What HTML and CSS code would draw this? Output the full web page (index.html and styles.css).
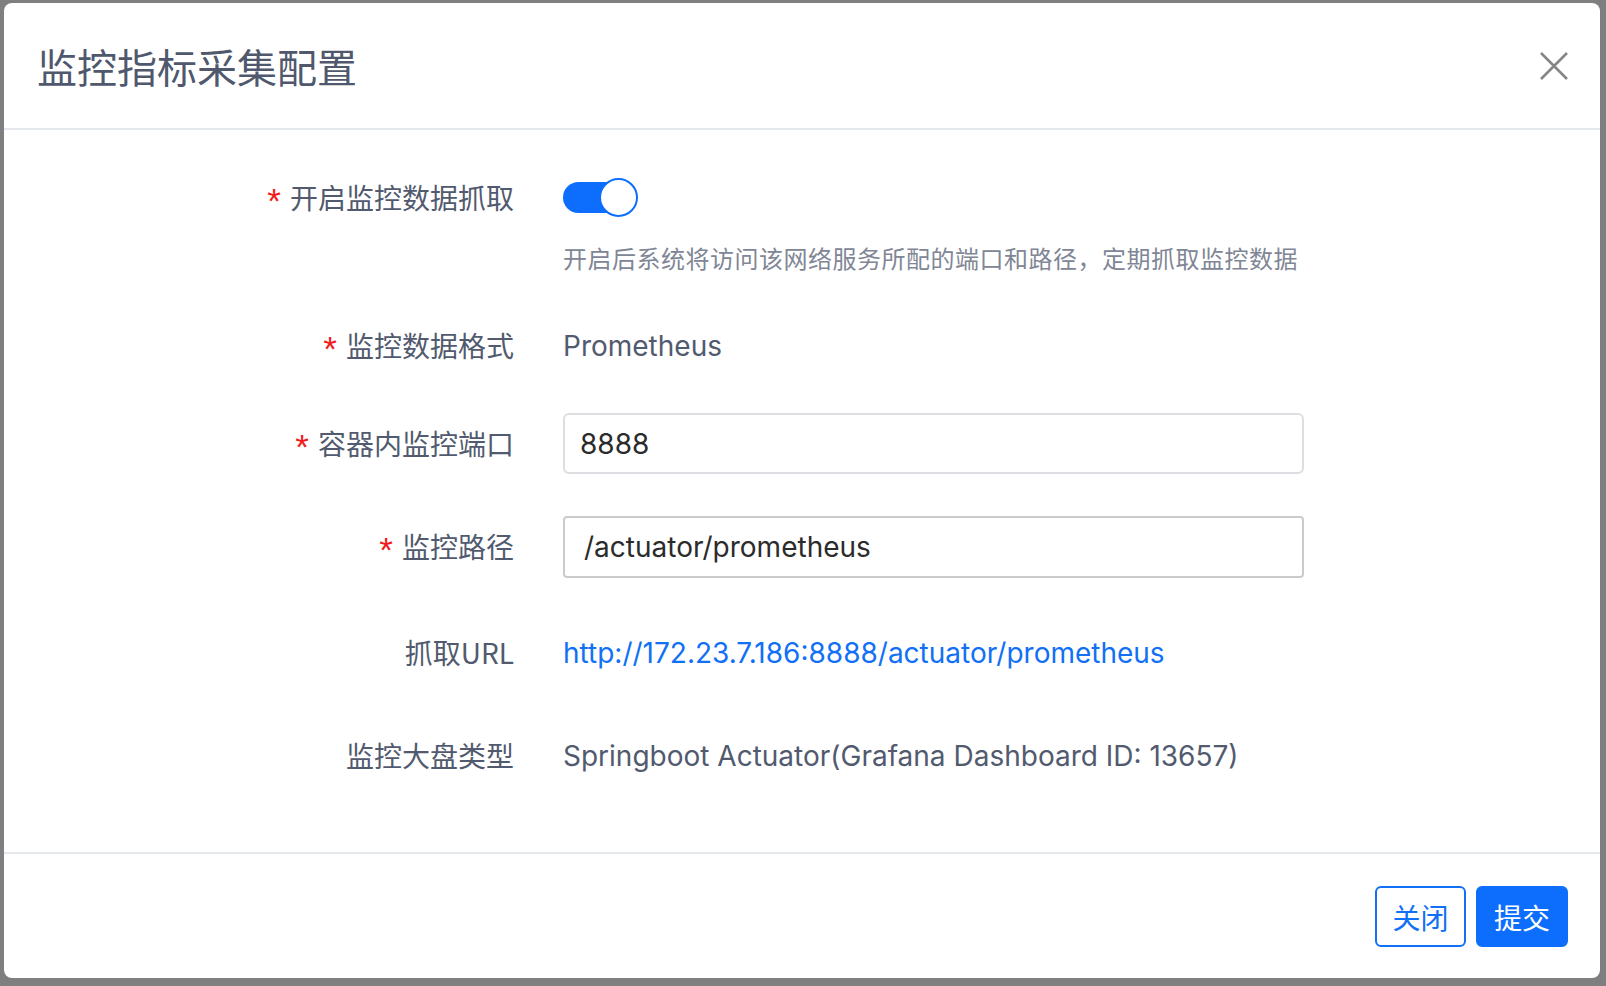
FILE: index.html
```html
<!DOCTYPE html>
<html lang="zh-CN">
<head>
<meta charset="UTF-8">
<title>监控指标采集配置</title>
<link rel="stylesheet" href="styles.css">
</head>
<body>

<div class="modal">
  <div class="modal-header">
    <div class="modal-title">监控指标采集配置</div>
    <span class="modal-close">
      <svg width="28" height="28" viewBox="0 0 28 28">
        <path d="M1 1 L27 27 M27 1 L1 27" stroke="#858585" stroke-width="2.6" fill="none"/>
      </svg>
    </span>
  </div>

  <div class="modal-body">
    <div class="form-item has-help">
      <label class="form-label required">开启监控数据抓取</label>
      <div class="form-content">
        <div class="control-line">
          <span class="switch switch-on"><span class="switch-knob"></span></span>
        </div>
        <div class="form-help">开启后系统将访问该网络服务所配的端口和路径，定期抓取监控数据</div>
      </div>
    </div>

    <div class="form-item">
      <label class="form-label required">监控数据格式</label>
      <div class="form-content">
        <div class="control-line form-text">Prometheus</div>
      </div>
    </div>

    <div class="form-item">
      <label class="form-label required">容器内监控端口</label>
      <div class="form-content">
        <input class="input input-number" type="text" value="8888">
      </div>
    </div>

    <div class="form-item">
      <label class="form-label required">监控路径</label>
      <div class="form-content">
        <input class="input input-path" type="text" value="/actuator/prometheus">
      </div>
    </div>

    <div class="form-item">
      <label class="form-label">抓取URL</label>
      <div class="form-content">
        <div class="control-line">
          <a class="form-link" href="#">http://172.23.7.186:8888/actuator/prometheus</a>
        </div>
      </div>
    </div>

    <div class="form-item">
      <label class="form-label">监控大盘类型</label>
      <div class="form-content">
        <div class="control-line form-text">Springboot Actuator(Grafana Dashboard ID: 13657)</div>
      </div>
    </div>
  </div>

  <div class="modal-footer">
    <button class="btn btn-ghost">关闭</button>
    <button class="btn btn-primary">提交</button>
  </div>
</div>

</body>
</html>
```

FILE: styles.css
```css
/* okno modalne na szarym tle */
body {
  margin: 0;
  padding: 3px 6px 8px 4px;
  background-color: #7f7f7f;
  font-family: Inter, "Noto Sans CJK SC", sans-serif;
}

.modal {
  width: 1596px;
  height: 975px;
  background-color: #fff;
  border-radius: 8px;
  display: flex;
  flex-direction: column;
  overflow: hidden;
}

.modal-header {
  height: 125px;
  border-bottom: 2px solid #e4e7eb;
  padding: 0 32px 0 33px;
  display: flex;
  align-items: center;
  justify-content: space-between;
  flex-shrink: 0;
}

.modal-title {
  font-family: "Noto Sans CJK SC", sans-serif;
  font-size: 40px;
  line-height: 1;
  color: #4f586d;
}

.modal-close {
  width: 28px;
  height: 28px;
  cursor: pointer;
  display: block;
}

.modal-close svg {
  display: block;
}

.modal-body {
  flex: 1;
  min-height: 0;
  padding: 37px 0 0;
}

.form-item {
  display: flex;
  align-items: flex-start;
  margin-bottom: 42px;
}

/* drobne korekty odstępów między wierszami */
.form-item.has-help {
  margin-bottom: 40px;
}

.form-item:nth-child(2) {
  margin-bottom: 38px;
}

.form-item:nth-child(4) {
  margin-bottom: 44px;
}

.form-item:nth-child(5) {
  margin-bottom: 43px;
}

.form-label {
  width: 510px;
  height: 60px;
  flex-shrink: 0;
  display: flex;
  align-items: center;
  justify-content: flex-end;
  font-family: "Noto Sans CJK SC", sans-serif;
  font-size: 28px;
  line-height: 1;
  color: #515a6e;
}

.form-label.required::before {
  content: "*";
  color: #f21b1b;
  margin-right: 9px;
  font-family: "Liberation Sans", sans-serif;
  font-size: 35px;
  line-height: 1;
  position: relative;
  top: 3px;
}

.form-content {
  margin-left: 49px;
  width: 741px;
}

.control-line {
  height: 60px;
  display: flex;
  align-items: center;
}

.form-text {
  font-size: 28px;
  color: #515a6e;
  padding-top: 2px;
  box-sizing: border-box;
}

.form-help {
  margin-top: 14px;
  font-family: "Noto Sans CJK SC", sans-serif;
  font-size: 24px;
  line-height: 34px;
  letter-spacing: 0.5px;
  color: #808695;
  white-space: nowrap;
}

.form-link {
  font-size: 28px;
  color: #1170f5;
  text-decoration: none;
  padding-top: 2px;
}

/* przełącznik */
.switch {
  position: relative;
  display: inline-block;
  width: 75px;
  height: 39px;
}

.switch::before {
  content: "";
  position: absolute;
  left: 0;
  top: 4px;
  width: 66px;
  height: 31px;
  border-radius: 16px;
  background-color: #0d6efd;
}

.switch-knob {
  position: absolute;
  right: 0;
  top: 0;
  width: 39px;
  height: 39px;
  box-sizing: border-box;
  border: 2px solid #0d6efd;
  border-radius: 50%;
  background-color: #fff;
}

/* pola tekstowe */
.input {
  display: block;
  width: 100%;
  height: 61px;
  box-sizing: border-box;
  margin: 0;
  font-family: Inter, "Noto Sans CJK SC", sans-serif;
  font-size: 28px;
  color: #2b2b2b;
  background-color: #fff;
  outline: none;
}

.input-number {
  border: 2px solid #dcdee2;
  border-radius: 6px;
  padding: 0 15px;
}

.input-path {
  height: 62px;
  border: 2px solid #cbcbcb;
  border-radius: 4px;
  padding: 0 19px;
}

.modal-footer {
  height: 126px;
  border-top: 2px solid #e4e7eb;
  box-sizing: border-box;
  padding: 32px 32px 0 0;
  display: flex;
  justify-content: flex-end;
  align-items: flex-start;
  gap: 10px;
  flex-shrink: 0;
}

.btn {
  width: 91px;
  height: 61px;
  box-sizing: border-box;
  border-radius: 6px;
  font-family: "Noto Sans CJK SC", sans-serif;
  font-size: 28px;
  cursor: pointer;
  padding: 0;
}

.btn-ghost {
  background-color: #fff;
  border: 2px solid #1170f5;
  color: #1170f5;
}

.btn-primary {
  width: 92px;
  background-color: #0d6efd;
  border: 2px solid #0d6efd;
  color: #fff;
}
```
